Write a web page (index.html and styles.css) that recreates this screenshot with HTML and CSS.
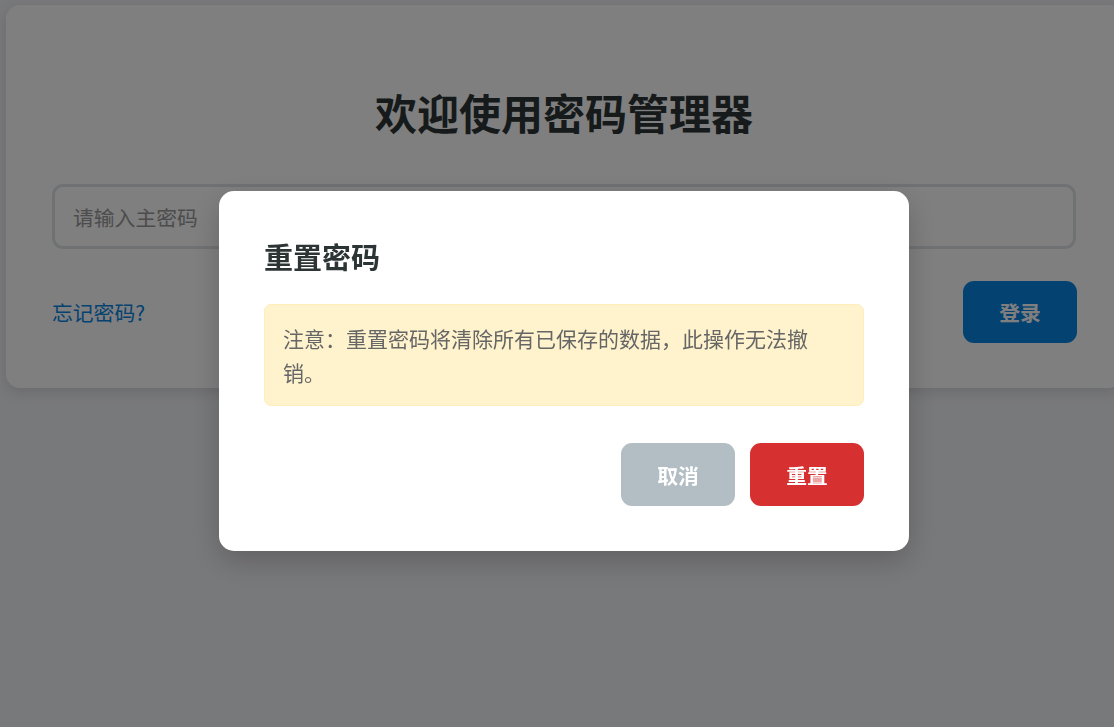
FILE: index.html
```html
<!DOCTYPE html>
<html lang="zh-CN">
<head>
<meta charset="utf-8">
<title>密码管理器</title>
<link rel="stylesheet" href="styles.css">
</head>
<body>
<div class="page">
  <div class="card">
    <h1 class="title">欢迎使用密码管理器</h1>
    <input class="pwd-input" type="password" placeholder="请输入主密码">
    <div class="row">
      <a class="forgot" href="#">忘记密码?</a>
      <button class="btn btn-primary">登录</button>
    </div>
  </div>
</div>
<div class="overlay">
  <div class="modal">
    <h2 class="modal-title">重置密码</h2>
    <div class="warning">注意：重置密码将清除所有已保存的数据，此操作无法撤销。</div>
    <div class="actions">
      <button class="btn btn-cancel">取消</button>
      <button class="btn btn-danger">重置</button>
    </div>
  </div>
</div>
</body>
</html>
```
FILE: styles.css
```css
* { box-sizing: border-box; }
html, body {
  margin: 0;
  padding: 0;
  overflow: hidden;
}
body {
  background: #f1f2f6;
  font-family: "Noto Sans CJK SC", "Noto Sans", sans-serif;
  width: 1114px;
  height: 727px;
}
.page {
  width: 1128px;
  padding: 5px 6px;
}
.card {
  background: #fff;
  border-radius: 14px;
  box-shadow: 0 4px 14px rgba(0,0,0,0.12);
  padding: 46px 46px 45px;
  display: flex;
  flex-direction: column;
}
.title {
  margin: 36px 0 47px;
  font-size: 42px;
  line-height: 50px;
  font-weight: 700;
  text-align: center;
  color: #2d3436;
}
.pwd-input {
  height: 65px;
  border: 3px solid #dfe3e6;
  border-radius: 11px;
  padding: 0 18px;
  font-size: 20.8px;
  font-family: inherit;
  color: #2d3436;
  background: #fff;
  outline: none;
}
.pwd-input::placeholder { color: #999; }
.row {
  margin-top: 32px;
  display: flex;
  justify-content: space-between;
  align-items: center;
}
.forgot {
  color: #0984e3;
  font-size: 20.8px;
  text-decoration: none;
}
.btn {
  width: 114px;
  height: 63px;
  border: none;
  border-radius: 11px;
  color: #fff;
  font-family: inherit;
  font-size: 20.8px;
  font-weight: 700;
  cursor: pointer;
}
.btn-primary { background: #0984e3; height: 62px; margin-right: -1px; }
.btn-cancel { background: #b2bec3; }
.btn-danger { background: #d63031; }
.overlay {
  position: fixed;
  top: 0;
  left: 0;
  width: 1128px;
  height: 727px;
  background: rgba(0,0,0,0.5);
  display: flex;
  justify-content: center;
  align-items: center;
  padding-top: 15px;
}
.modal {
  width: 690px;
  background: #fff;
  border-radius: 15px;
  padding: 45px;
  box-shadow: 0 10px 30px rgba(0,0,0,0.2);
}
.modal-title {
  margin: 3px 0 0;
  font-size: 29px;
  line-height: 35px;
  font-weight: 700;
  color: #2d3436;
}
.warning {
  margin-top: 30px;
  background: #fff3cd;
  border: 1px solid #ffeeba;
  border-radius: 7px;
  padding: 16px 22px 16px 18px;
  font-size: 21px;
  line-height: 34px;
  color: #666;
}
.actions {
  margin-top: 37px;
  display: flex;
  justify-content: flex-end;
  gap: 15px;
}
```
